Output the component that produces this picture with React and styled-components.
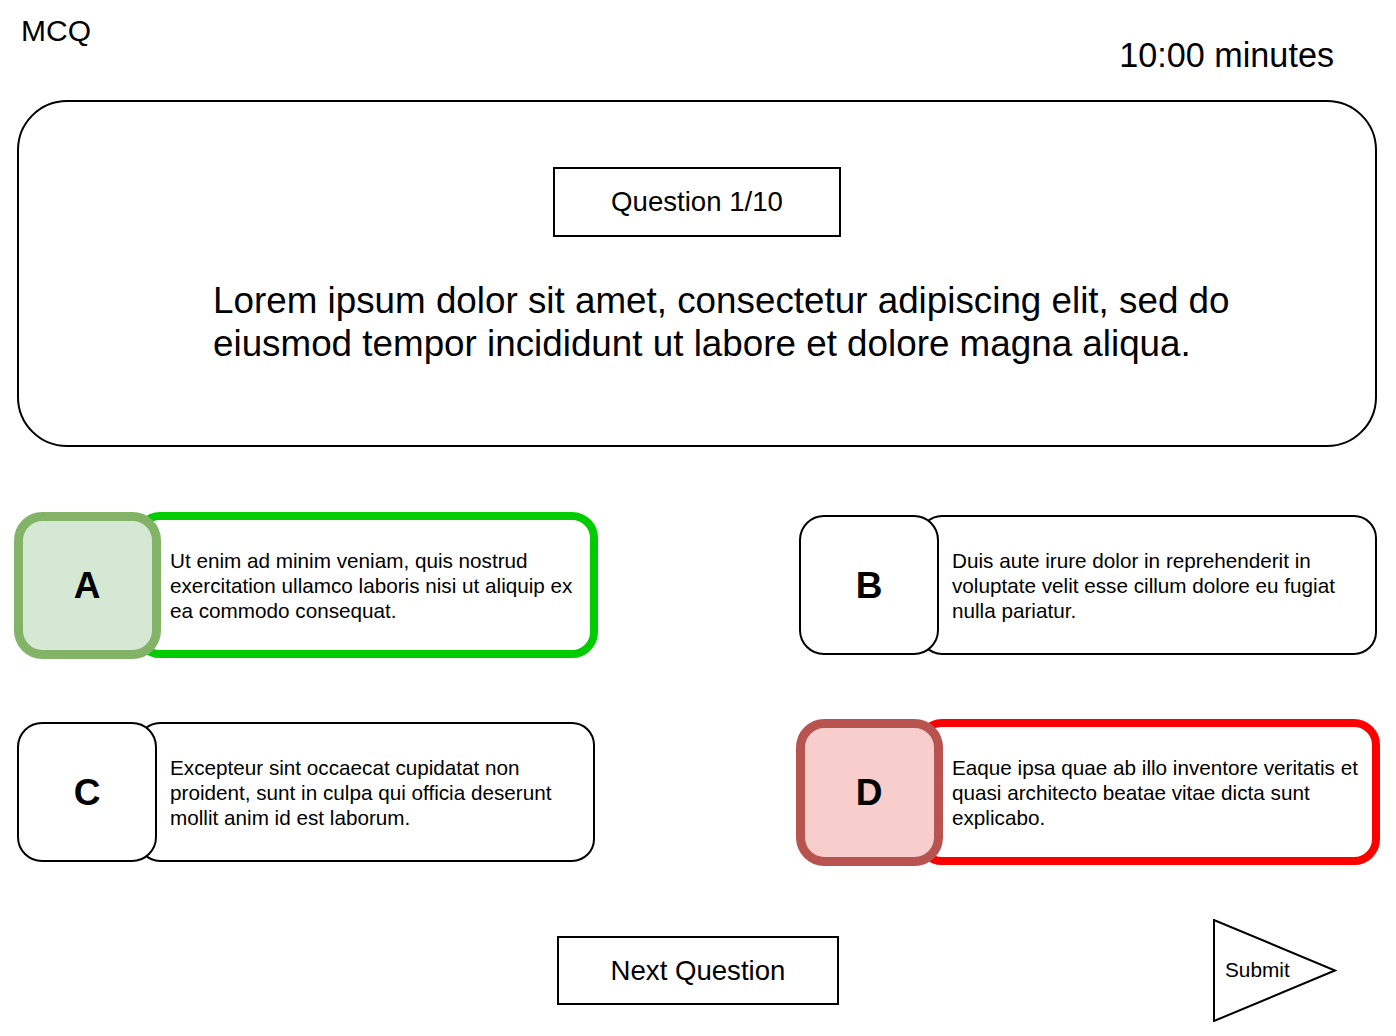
import React from "react";
import styled, { createGlobalStyle } from "styled-components";

const GlobalStyle = createGlobalStyle`
  html, body { margin: 0; padding: 0; background: #ffffff; }
  body { font-family: "Liberation Sans", Arial, sans-serif; color: #000; }
`;

const Page = styled.div`
  width: 1396px;
  min-height: 1036px;
  box-sizing: border-box;
`;

const Header = styled.header`
  height: 100px;
  box-sizing: border-box;
  display: flex;
  justify-content: space-between;
  align-items: flex-start;
  padding: 0 62px 0 21px;
`;

const Title = styled.h1`
  margin: 14px 0 0;
  font-size: 30px;
  line-height: 34px;
  font-weight: normal;
`;

const Timer = styled.div`
  margin-top: 35px;
  font-size: 34.2px;
  line-height: 40px;
`;

const Main = styled.main`
  padding: 0 19px 0 17px;
`;

const QuestionCard = styled.section`
  box-sizing: border-box;
  width: 1360px;
  height: 347px;
  border: 2px solid #000;
  border-radius: 50px;
  padding-top: 65px;
  display: flex;
  flex-direction: column;
`;

const Counter = styled.div`
  align-self: center;
  box-sizing: border-box;
  width: 288px;
  height: 70px;
  border: 2px solid #000;
  display: flex;
  align-items: center;
  justify-content: center;
  font-size: 27.6px;
`;

const QuestionText = styled.p`
  margin: 42px 0 0 194px;
  width: 1090px;
  font-size: 36.8px;
  line-height: 43px;
`;

const Options = styled.div`
  margin-top: 69px;
  padding-left: 1px;
  display: grid;
  grid-template-columns: 576px 576px;
  column-gap: 206px;
  row-gap: 69px;
`;

const OptionCard = styled.div`
  display: flex;
  align-items: center;
  width: 576px;
  height: 138px;
`;

const Letter = styled.div`
  --bw: ${(p) => p.$bw}px;
  position: relative;
  z-index: 1;
  flex-shrink: 0;
  box-sizing: border-box;
  width: calc(138px + var(--bw));
  height: calc(138px + var(--bw));
  margin: 0 calc(var(--bw) / -2);
  border: var(--bw) solid ${(p) => p.$stroke};
  border-radius: calc(24px + var(--bw) / 2);
  background: ${(p) => p.$fill};
  display: flex;
  align-items: center;
  justify-content: center;
  padding-top: 2px;
  font-size: 37px;
  font-weight: bold;
`;

const AnswerBox = styled.div`
  --bw: ${(p) => p.$bw}px;
  flex-shrink: 0;
  box-sizing: border-box;
  width: calc(456px + var(--bw));
  height: calc(138px + var(--bw));
  margin-left: calc(-18px - var(--bw) / 2);
  margin-right: calc(var(--bw) / -2);
  border: var(--bw) solid ${(p) => p.$stroke};
  border-radius: calc(22px + var(--bw) / 2);
  background: #fff;
  padding-left: calc(32px - var(--bw) / 2);
  display: flex;
  align-items: center;
`;

const AnswerText = styled.p`
  margin: 0;
  max-width: 418px;
  font-size: 20.7px;
  line-height: 25px;
`;

const Footer = styled.footer`
  margin-top: 58px;
  display: grid;
  grid-template-columns: 1fr auto 1fr;
  align-items: center;
  height: 103px;
`;

const NextButton = styled.button`
  grid-column: 2;
  box-sizing: border-box;
  width: 282px;
  height: 69px;
  border: 2px solid #000;
  background: #fff;
  padding: 0;
  font-family: "Liberation Sans", Arial, sans-serif;
  font-size: 27.6px;
  color: #000;
  cursor: pointer;
`;

const SubmitButton = styled.button`
  grid-column: 3;
  justify-self: end;
  margin-right: 59px;
  position: relative;
  width: 124px;
  height: 103px;
  border: none;
  background: transparent;
  padding: 0 0 2px 12px;
  display: flex;
  align-items: center;
  font-family: "Liberation Sans", Arial, sans-serif;
  font-size: 20.8px;
  color: #000;
  cursor: pointer;
`;

const TriangleShape = styled.svg`
  position: absolute;
  inset: 0;
`;

const SubmitLabel = styled.span`
  position: relative;
`;

const answers = [
  {
    key: "A",
    text: "Ut enim ad minim veniam, quis nostrud exercitation ullamco laboris nisi ut aliquip ex ea commodo consequat.",
    letter: { bw: 9, stroke: "#82b366", fill: "#d5e8d4" },
    box: { bw: 8, stroke: "#00cc00" },
  },
  {
    key: "B",
    text: "Duis aute irure dolor in reprehenderit in voluptate velit esse cillum dolore eu fugiat nulla pariatur.",
    letter: { bw: 2, stroke: "#000", fill: "#fff" },
    box: { bw: 2, stroke: "#000" },
  },
  {
    key: "C",
    text: "Excepteur sint occaecat cupidatat non proident, sunt in culpa qui officia deserunt mollit anim id est laborum.",
    letter: { bw: 2, stroke: "#000", fill: "#fff" },
    box: { bw: 2, stroke: "#000" },
  },
  {
    key: "D",
    text: "Eaque ipsa quae ab illo inventore veritatis et quasi architecto beatae vitae dicta sunt explicabo.",
    letter: { bw: 9, stroke: "#b85450", fill: "#f8cecc" },
    box: { bw: 8, stroke: "#ff0000" },
  },
];

export default function App() {
  return (
    <Page>
      <GlobalStyle />
      <Header>
        <Title>MCQ</Title>
        <Timer>10:00 minutes</Timer>
      </Header>
      <Main>
        <QuestionCard>
          <Counter>Question 1/10</Counter>
          <QuestionText>
            Lorem ipsum dolor sit amet, consectetur adipiscing elit, sed do
            eiusmod tempor incididunt ut labore et dolore magna aliqua.
          </QuestionText>
        </QuestionCard>
        <Options>
          {answers.map((a) => (
            <OptionCard key={a.key}>
              <Letter
                $bw={a.letter.bw}
                $stroke={a.letter.stroke}
                $fill={a.letter.fill}
              >
                {a.key}
              </Letter>
              <AnswerBox $bw={a.box.bw} $stroke={a.box.stroke}>
                <AnswerText>{a.text}</AnswerText>
              </AnswerBox>
            </OptionCard>
          ))}
        </Options>
      </Main>
      <Footer>
        <NextButton>Next Question</NextButton>
        <SubmitButton>
          <TriangleShape width="124" height="103" viewBox="0 0 124 103">
            <polygon
              points="1,1 1,102 122,51.5"
              fill="#fff"
              stroke="#000"
              strokeWidth="2"
              strokeLinejoin="miter"
            />
          </TriangleShape>
          <SubmitLabel>Submit</SubmitLabel>
        </SubmitButton>
      </Footer>
    </Page>
  );
}
